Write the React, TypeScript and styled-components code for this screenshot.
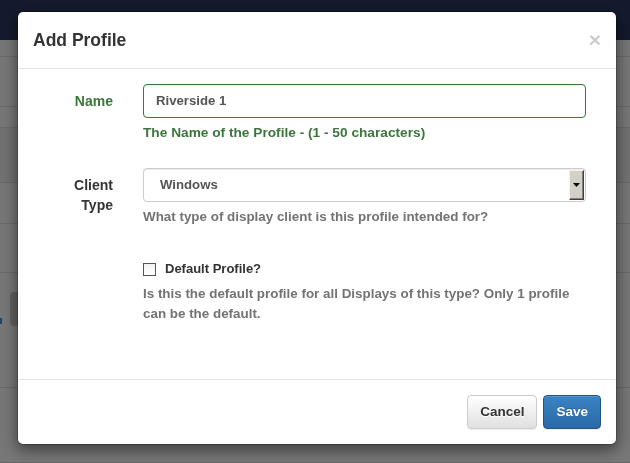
import React from "react";
import styled, { createGlobalStyle } from "styled-components";

const Global = createGlobalStyle`
  html, body { margin: 0; padding: 0; }
  body {
    font-family: "Liberation Sans", Arial, Helvetica, sans-serif;
    font-size: 14px;
    line-height: 20px;
    color: #333;
    background: #efefef;
    overflow: hidden;
  }
  * { box-sizing: border-box; }
`;

/* ---------- page behind the dialog ---------- */
const Page = styled.div`
  width: 630px;
  height: 463px;
  display: flex;
  flex-direction: column;
  background: #efefef;
`;

const Navbar = styled.div`
  height: 40px;
  flex: none;
  background: #29355c;
`;

const TableRow = styled.div<{ $h: number; $tone?: string }>`
  height: ${(p) => p.$h}px;
  flex: none;
  background: ${(p) => p.$tone || "#efefef"};
  border-bottom: 1px solid #d2d2d2;
  display: flex;
  align-items: center;
  gap: 8px;
`;

const LinkBit = styled.span`
  width: 2px;
  height: 6px;
  background: #3a8ec8;
  margin-top: -18px;
`;

const GhostButton = styled.span`
  width: 40px;
  height: 34px;
  border-radius: 4px;
  background: #c4c4c4;
  margin-top: -42px;
`;

/* ---------- modal ---------- */
const Backdrop = styled.div`
  position: fixed;
  inset: 0;
  background: rgba(0, 0, 0, 0.5);
`;

const DialogLayer = styled.div`
  position: fixed;
  inset: 0;
  padding: 12px 0 0 18px;
`;

const Modal = styled.div`
  background: #fff;
  border: 1px solid rgba(0, 0, 0, 0.2);
  border-radius: 6px;
  box-shadow: 0 5px 15px rgba(0, 0, 0, 0.5);
  background-clip: padding-box;
  display: flex;
  flex-direction: column;
  margin: -1px 0 0 -1px;
  width: 600px;
`;

const Header = styled.div`
  height: 57px;
  padding: 15px 15px 0 15px;
  border-bottom: 1px solid #e5e5e5;
  display: flex;
  justify-content: space-between;
  align-items: flex-start;
`;

const Title = styled.h4`
  margin: 0;
  font-size: 17.5px;
  font-weight: 700;
  line-height: 26px;
  color: #333;
`;

const Close = styled.span`
  font-size: 21px;
  font-weight: 700;
  line-height: 21px;
  color: #000;
  opacity: 0.2;
  margin-top: 2px;
`;

const Body = styled.div`
  padding: 15px 30px 45px 15px;
  display: flex;
  flex-direction: column;
  gap: 15px;
`;

const Group = styled.div`
  display: grid;
  grid-template-columns: 80px 1fr;
  column-gap: 30px;
`;

const Label = styled.label<{ $ok?: boolean }>`
  text-align: right;
  font-weight: 700;
  font-size: 14px;
  line-height: 20px;
  padding-top: 7px;
  color: ${(p) => (p.$ok ? "#3c763d" : "#333")};
`;

const Field = styled.div`
  display: flex;
  flex-direction: column;
  min-width: 0;
`;

const Input = styled.div<{ $ok?: boolean }>`
  height: 34px;
  padding: 0 12px;
  display: flex;
  align-items: center;
  border: 1px solid ${(p) => (p.$ok ? "#3c763d" : "#ccc")};
  border-radius: 4px;
  box-shadow: inset 0 1px 1px rgba(0, 0, 0, 0.075);
  font-size: 13.2px;
  font-weight: 700;
  color: #555;
`;

const Select = styled.div`
  height: 34px;
  padding: 1px 1px 1px 16px;
  display: flex;
  align-items: center;
  justify-content: space-between;
  border: 1px solid #ccc;
  border-radius: 4px;
  box-shadow: inset 0 1px 1px rgba(0, 0, 0, 0.075);
  font-size: 13.2px;
  font-weight: 700;
  color: #555;
`;

const ArrowButton = styled.span`
  width: 15px;
  height: 30px;
  background: #d4d0c8;
  border-top: 1px solid #f4f3ef;
  border-left: 1px solid #f4f3ef;
  border-right: 1px solid #404040;
  border-bottom: 1px solid #404040;
  box-shadow: inset -1px -1px 0 #808080;
  display: flex;
  align-items: center;
  justify-content: center;
`;

const Help = styled.div<{ $ok?: boolean }>`
  margin: 5px 0 10px;
  font-size: ${(p) => (p.$ok ? "13.7px" : "13.4px")};
  font-weight: 700;
  line-height: 20px;
  color: ${(p) => (p.$ok ? "#3c763d" : "#737373")};
`;

const CheckRow = styled.label`
  min-height: 27px;
  padding-top: 7px;
  display: flex;
  align-items: center;
  gap: 9px;
  font-size: 13px;
  font-weight: 700;
  line-height: 20px;
  color: #333;
`;

const Box = styled.span`
  width: 13px;
  height: 13px;
  border: 1px solid #555;
  background: linear-gradient(#f2f2f2, #fff);
  flex: none;
`;

const Footer = styled.div`
  border-top: 1px solid #e5e5e5;
  padding: 15px;
  display: flex;
  justify-content: flex-end;
  gap: 6px;
`;

const Button = styled.button<{ $primary?: boolean }>`
  height: 34px;
  padding: 0 12px;
  border-radius: 4px;
  font-family: inherit;
  font-size: 13.5px;
  font-weight: 700;
  line-height: 20px;
  cursor: pointer;
  border: 1px solid ${(p) => (p.$primary ? "#245580" : "#ccc")};
  color: ${(p) => (p.$primary ? "#fff" : "#333")};
  text-shadow: ${(p) =>
    p.$primary ? "0 -1px 0 rgba(0,0,0,.2)" : "0 1px 0 #fff"};
  background: ${(p) =>
    p.$primary
      ? "linear-gradient(to bottom, #3b84c4 0%, #2a69a6 100%)"
      : "linear-gradient(to bottom, #fff 0%, #e0e0e0 100%)"};
  box-shadow: inset 0 1px 0 rgba(255, 255, 255, 0.15),
    0 1px 1px rgba(0, 0, 0, 0.075);
`;

const rows: { h: number; tone?: string }[] = [
  { h: 17 },
  { h: 50 },
  { h: 21 },
  { h: 55, tone: "#e4e4e4" },
  { h: 41 },
  { h: 49 },
  { h: 115 },
  { h: 75 },
];

export default function App() {
  return (
    <>
      <Global />
      <Page>
        <Navbar />
        {rows.map((r, i) => (
          <TableRow key={i} $h={r.h} $tone={r.tone}>
            {i === 6 && (
              <>
                <LinkBit />
                <GhostButton />
              </>
            )}
          </TableRow>
        ))}
      </Page>
      <Backdrop />
      <DialogLayer>
        <Modal>
          <Header>
            <Title>Add Profile</Title>
            <Close>×</Close>
          </Header>
          <Body>
            <Group>
              <Label $ok>Name</Label>
              <Field>
                <Input $ok>Riverside 1</Input>
                <Help $ok>The Name of the Profile - (1 - 50 characters)</Help>
              </Field>
            </Group>
            <Group>
              <Label>
                Client
                <br />
                Type
              </Label>
              <Field>
                <Select>
                  <span>Windows</span>
                  <ArrowButton>
                    <svg width="7" height="4" viewBox="0 0 7 4">
                      <path d="M0 0H7L3.5 4Z" fill="#000" />
                    </svg>
                  </ArrowButton>
                </Select>
                <Help>What type of display client is this profile intended for?</Help>
              </Field>
            </Group>
            <Group>
              <span />
              <Field>
                <CheckRow>
                  <Box />
                  Default Profile?
                </CheckRow>
                <Help>
                  Is this the default profile for all Displays of this type? Only 1
                  profile can be the default.
                </Help>
              </Field>
            </Group>
          </Body>
          <Footer>
            <Button>Cancel</Button>
            <Button $primary>Save</Button>
          </Footer>
        </Modal>
      </DialogLayer>
    </>
  );
}
